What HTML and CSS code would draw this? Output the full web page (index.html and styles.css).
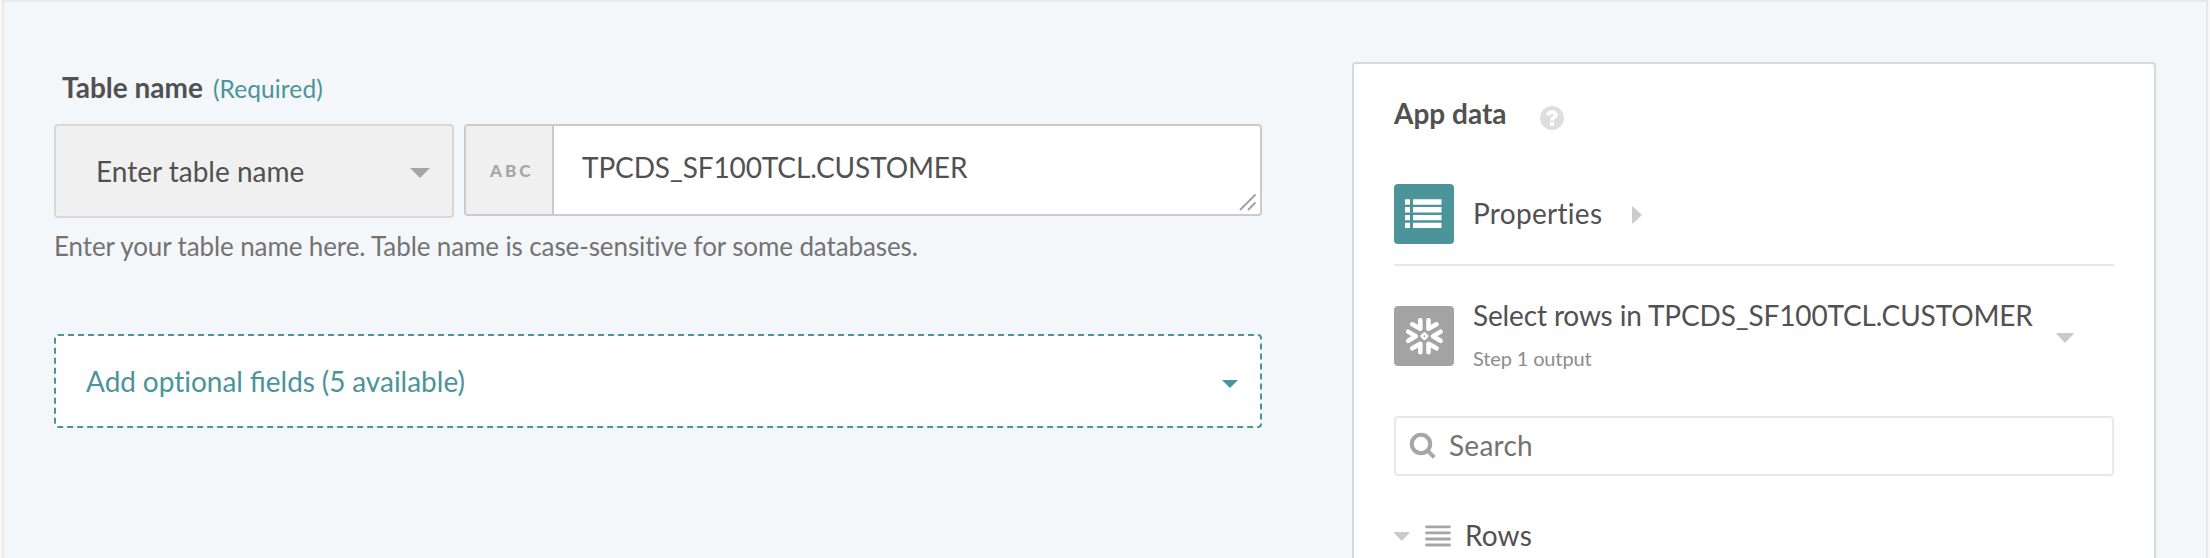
FILE: index.html
```html
<!DOCTYPE html>
<html lang="en">
<head>
<meta charset="utf-8">
<title>Table setup</title>
<link rel="stylesheet" href="styles.css">
</head>
<body>
<main class="page">
  <section class="form">
    <div class="label"><span class="label-name">Table name</span><span class="label-req">(Required)</span></div>
    <div class="field-row">
      <div class="select"><span>Enter table name</span>
        <svg class="select-caret" width="20" height="10" viewBox="0 0 20 10"><path d="M0 0H20L10 10Z" fill="#a6a6a6"/></svg>
      </div>
      <div class="input">
        <div class="type">ABC</div>
        <div class="value">TPCDS_SF100TCL.CUSTOMER</div>
        <svg class="grip" width="18" height="18" viewBox="0 0 18 18"><path d="M1 17L16.500 1.500M9 17L16.500 9.500" stroke="#a3a3a3" stroke-width="2" fill="none"/></svg>
      </div>
    </div>
    <p class="hint">Enter your table name here. Table name is case-sensitive for some databases.</p>
    <div class="optional">
      <svg class="dashes" width="1208" height="94" viewBox="0 0 1208 94"><rect x="1" y="1" width="1206" height="92" rx="3" fill="#fff" stroke="#4a949a" stroke-width="2" stroke-dasharray="6 4"/></svg>
      <span class="optional-text">Add <span class="plain">optional</span> fields (5 available)</span>
      <svg class="optional-caret" width="16" height="8" viewBox="0 0 16 8"><path d="M0 0H16L8 8Z" fill="#4a949a"/></svg>
    </div>
  </section>
  <aside class="panel">
    <div class="panel-head"><h2 class="panel-title">App data</h2>
      <svg class="help" width="24" height="24" viewBox="0 0 24 24"><circle cx="12" cy="12" r="12" fill="#dedede"/><path d="M7.800 9.300C8.700 6.800 10.200 6 12 6C14.200 6 15.800 7.200 15.800 9C15.800 11.300 12 11.500 12 14.500" fill="none" stroke="#fff" stroke-width="3.800"/><rect x="10" y="16" width="4" height="4" fill="#fff"/></svg>
    </div>
    <div class="source source-props">
      <svg class="tile" width="60" height="60" viewBox="0 0 60 60"><rect width="60" height="60" rx="4" fill="#4a949a"/><path d="M11 15.300h5v5.400h-5zM11 23.100h5v5.400h-5zM11 30.900h5v5.400h-5zM11 38.700h5v5.400h-5zM19 15.300h28.500v5.400H19zM19 23.100h28.500v5.400H19zM19 30.900h28.500v5.400H19zM19 38.700h28.500v5.400H19z" fill="#fff"/></svg>
      <span class="props-name">Properties</span>
      <svg class="props-caret" width="10" height="18" viewBox="0 0 10 18"><path d="M0 .5L1 .5L10 9L1 17.500H0Z" fill="#cbcbcb"/></svg>
    </div>
    <div class="source source-step">
      <svg class="tile" width="60" height="60" viewBox="0 0 60 60"><rect width="60" height="60" rx="4" fill="#a3a3a3"/>
        <g fill="none" stroke="#fff" stroke-width="4.600" stroke-linecap="round" stroke-linejoin="round">
          <path d="M14.200 25.600L21.800 30.200L14.200 34.800"/><path d="M46.600 25.600L39 30.200L46.600 34.800"/>
          <path d="M26.300 14.300V22.800L18.300 18.300"/><path d="M34.500 14.300V22.800L42.500 18.300"/>
          <path d="M26.300 46.300V37.800L18.300 42.300"/><path d="M34.500 46.300V37.800L42.500 42.300"/>
        </g>
        <path d="M30.400 27.300L33.300 30.200L30.400 33.100L27.500 30.200Z" fill="none" stroke="#fff" stroke-width="2.400" stroke-linejoin="round"/>
      </svg>
      <div class="step-text"><span class="source-name">Select rows in TPCDS_SF100TCL.CUSTOMER</span><span class="step-note">Step 1 output</span></div>
      <svg class="step-caret" width="18" height="10" viewBox="0 0 18 10"><path d="M.5 0H17.500V1L9 10L.5 1Z" fill="#cbcbcb"/></svg>
    </div>
    <div class="search">
      <svg width="28" height="28" viewBox="0 0 28 28"><circle cx="12" cy="12" r="9.200" fill="none" stroke="#a6a6a6" stroke-width="4"/><path d="M18.800 18.800L25.300 25.300" stroke="#a6a6a6" stroke-width="3.800"/></svg>
      <span class="search-text">Search</span>
    </div>
    <div class="rows">
      <svg width="16" height="9" viewBox="0 0 16 9"><path d="M0 0H15.500V1L7.700 9L0 1Z" fill="#cbcbcb"/></svg>
      <svg class="lines" width="26" height="22" viewBox="0 0 26 22"><path d="M1.500 1.800H24.500M1.500 7.800H24.500M1.500 14H24.500M1.500 20H24.500" stroke="#a6a6a6" stroke-width="2.800" stroke-linecap="round"/></svg>
      <span class="rows-text">Rows</span>
    </div>
  </aside>
</main>
</body>
</html>
```

FILE: styles.css
```css
* { box-sizing: border-box; }
html, body { margin: 0; height: 100%; overflow: hidden; }
body { background: #f8f8f8; font-family: Lato, sans-serif; font-size: 28px; line-height: 34px; color: #515151; padding: 0 2px; white-space: nowrap; }
svg { display: block; flex: none; }
.page { display: flex; justify-content: space-between; align-items: flex-start; height: 558px; border: 2px solid #e8e8e8; border-bottom: 0; background: #f3f7fa; padding: 60px 50px 0; overflow: hidden; }
.form { width: 1208px; padding-top: 8px; }
.label { display: flex; align-items: baseline; gap: 10px; height: 54px; padding: 0 0 0 8px; line-height: 34px; }
.label-name { font-weight: 700; }
.label-req { font-size: 24.5px; letter-spacing: 0.1px; color: #4a949a; }
.field-row { display: flex; align-items: flex-start; gap: 10px; }
.select { display: flex; justify-content: space-between; align-items: center; width: 400px; height: 94px; border: 2px solid #d8d8d8; border-radius: 4px; background: #f0f0f0; padding: 0 22px 0 40px; }
.select-caret { margin-top: 3px; }
.input { position: relative; display: flex; width: 798px; height: 92px; border: 2px solid #cbcbcb; border-radius: 4px; background: #fff; overflow: hidden; }
.type { width: 88px; border-right: 2px solid #cbcbcb; background: #f0f0f0; padding: 0 0 0 24px; font-size: 17px; font-weight: 900; letter-spacing: 3px; line-height: 89px; color: #a6a6a6; }
.value { padding: 24px 0 0 28px; letter-spacing: -0.12px; }
.grip { position: absolute; right: 3px; bottom: 3px; }
.hint { margin: 11px 0 0; font-size: 26px; line-height: 34px; letter-spacing: -0.11px; color: #737373; }
.optional { position: relative; display: flex; align-items: center; justify-content: space-between; height: 94px; margin-top: 71px; padding: 0 24px 0 32px; color: #4a949a; }
.dashes { position: absolute; inset: 0; }
.optional-text, .optional-caret { position: relative; }
.optional-text { word-spacing: -0.4px; }
.optional-caret { margin-top: 6px; }
.plain { font-variant-ligatures: none; }
.panel { width: 804px; height: 520px; border: 2px solid #d8d8d8; border-radius: 4px; background: #fff; padding: 32px 40px 0; }
.panel-head { display: flex; align-items: center; height: 34px; gap: 33px; }
.panel-title { margin: 0; font-size: 28px; line-height: 34px; font-weight: 700; }
.help { margin-top: 9px; }
.source { display: flex; }
.source-props { align-items: center; height: 136px; padding-bottom: 20px; padding-top: 54px; border-bottom: 2px solid #e8e8e8; gap: 19px; }
.props-name { letter-spacing: 0.3px; padding-bottom: 2px; }
.props-caret { margin: 2px 0 0 11px; }
.source-step { padding-top: 40px; height: 150px; gap: 19px; }
.step-text { display: flex; flex-direction: column; margin-top: -8px; letter-spacing: -0.14px; }
.step-note { font-size: 20px; line-height: 26px; margin-top: 13px; color: #8c8c8c; }
.step-caret { margin: 27px 0 0 4px; }
.search { display: flex; align-items: center; gap: 12px; height: 60px; border: 2px solid #e8e8e8; border-radius: 4px; padding: 0 13px; color: #737373; }
.search-text { padding-bottom: 2px; letter-spacing: 0.25px; }
.rows { display: flex; align-items: center; margin-top: 43px; height: 34px; }
.lines { margin: 0 14px 0 15px; }
.rows-text { padding-bottom: 2px; letter-spacing: 0.15px; }
```
